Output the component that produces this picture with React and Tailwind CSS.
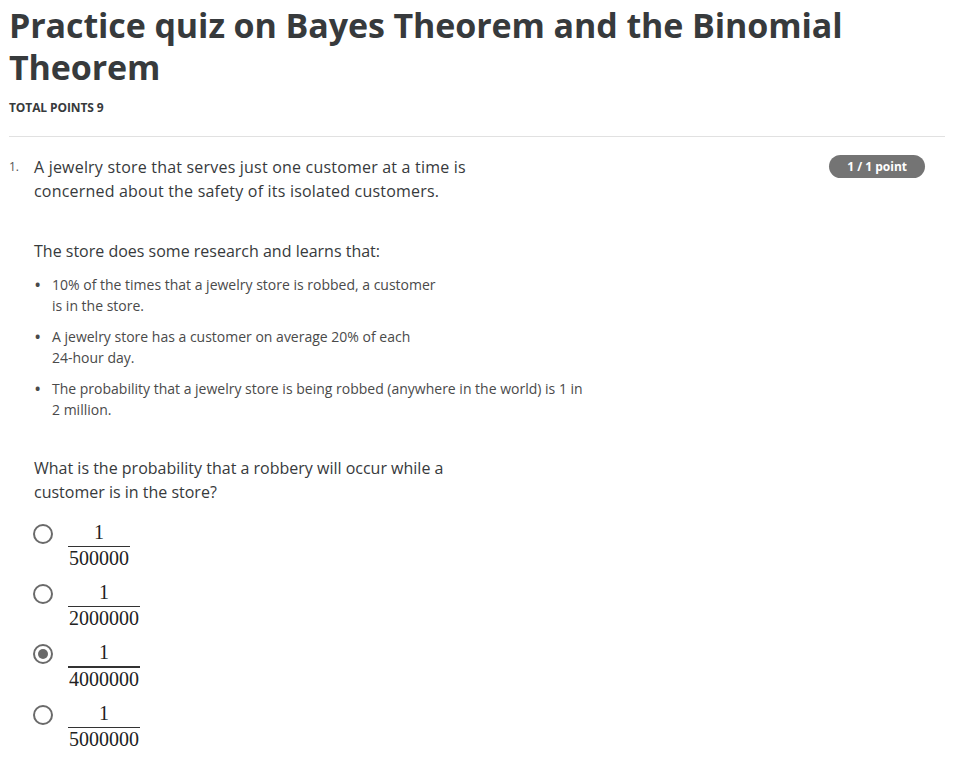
import React from 'react';

const options = [
  { den: '500000', checked: false },
  { den: '2000000', checked: false },
  { den: '4000000', checked: true },
  { den: '5000000', checked: false },
];

const Radio = ({ checked }) => (
  <div className="w-[20px] h-[20px] rounded-full border-2 border-[#6a6a6a] flex items-center justify-center bg-white">
    {checked && <div className="w-[10px] h-[10px] rounded-full bg-[#6a6a6a]"></div>}
  </div>
);

const Fraction = ({ den, checked }) => (
  <div className="inline-flex flex-col items-center text-[#222] text-[20px] leading-[20px]" style={{ fontFamily: '"Liberation Serif", "DejaVu Serif", serif' }}>
    <span className="pb-[4px]">1</span>
    <span className={`${checked ? 'border-t-2' : 'border-t'} border-[#333] pt-[1px] px-[1px]`}>{den}</span>
  </div>
);

export default function App() {
  return (
    <div className="bg-white min-h-screen pl-[9px] pr-[27px] pt-[4px]" style={{ fontFamily: '"Open Sans", "Noto Sans", sans-serif' }}>
      <h1 className="text-[34px] leading-[42px] font-bold text-[#373a3c] tracking-[-0.1px]">
        Practice quiz on Bayes Theorem and the Binomial Theorem
      </h1>
      <div className="mt-[12px] text-[12px] leading-[16px] font-bold text-[#373a3c] tracking-[-0.1px] uppercase">Total points 9</div>
      <div className="mt-[20px] border-t border-[#e1e1e1]"></div>

      <div className="flex mt-[18px]">
        <div className="w-[25px] shrink-0 text-[12px] leading-[24px] text-[#555]">1.</div>
        <div className="flex-1 text-[#373a3c]">
          <div className="flex justify-between items-start">
            <p className="text-[16px] leading-[24px] w-[450px] tracking-[0.2px]">
              A jewelry store that serves just one customer at a time is<br />concerned about the safety of its isolated customers.
            </p>
            <span className="mt-[0px] mr-[20px] bg-[#747474] text-white text-[12px] font-bold rounded-full px-[18px] leading-[23px]">
              1 / 1 point
            </span>
          </div>

          <p className="mt-[36px] text-[16px] leading-[24px]">The store does some research and learns that:</p>

          <ul className="mt-[11px] text-[14px] leading-[21px] text-[#4a4a4a] flex flex-col gap-[10px]">
            <li className="flex">
              <span className="w-[18px] shrink-0 pl-[1px] font-bold">•</span>
              <span>10% of the times that a jewelry store is robbed, a customer<br />is in the store.</span>
            </li>
            <li className="flex">
              <span className="w-[18px] shrink-0 pl-[1px] font-bold">•</span>
              <span>A jewelry store has a customer on average 20% of each<br />24-hour day.</span>
            </li>
            <li className="flex">
              <span className="w-[18px] shrink-0 pl-[1px] font-bold">•</span>
              <span>The probability that a jewelry store is being robbed (anywhere in the world) is 1 in<br />2 million.</span>
            </li>
          </ul>

          <p className="mt-[36px] text-[16px] leading-[24px]">
            What is the probability that a robbery will occur while a<br />customer is in the store?
          </p>

          <div className="mt-[18px] flex flex-col gap-[14px]">
            {options.map((o) => (
              <div key={o.den} className="flex items-start">
                <div className="pt-[2px] ml-[-1px] w-[35px] shrink-0">
                  <Radio checked={o.checked} />
                </div>
                <Fraction den={o.den} checked={o.checked} />
              </div>
            ))}
          </div>
        </div>
      </div>
    </div>
  );
}
